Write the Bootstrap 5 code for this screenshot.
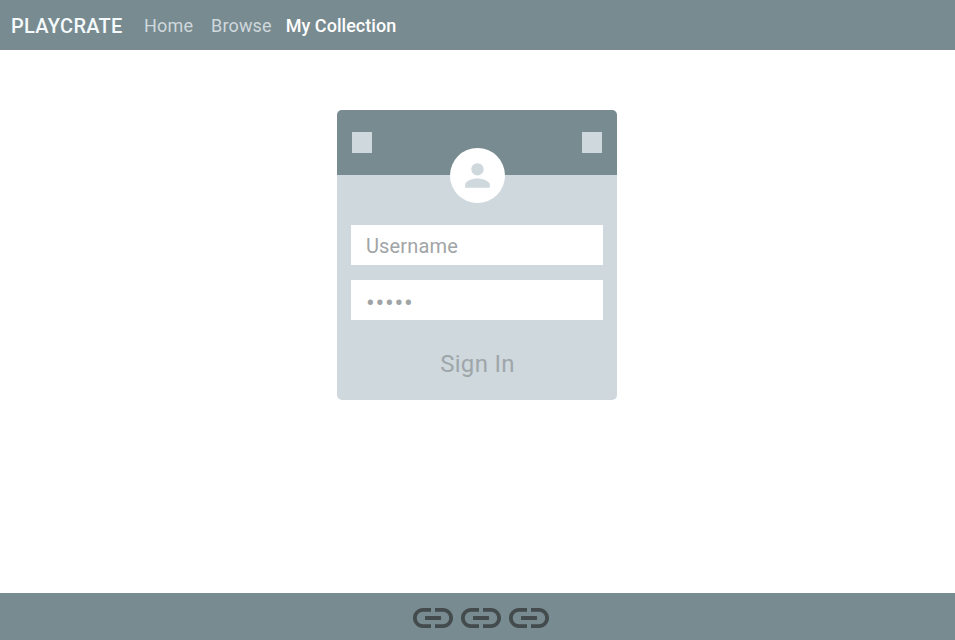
<!DOCTYPE html>
<html lang="en">
<head>
<meta charset="utf-8">
<meta name="viewport" content="width=device-width, initial-scale=1">
<title>Playcrate</title>
<link href="https://cdn.jsdelivr.net/npm/bootstrap@5.3.0/dist/css/bootstrap.min.css" rel="stylesheet">
<style>
  :root { --slate: #788b90; --mist: #cfd8dd; --ink: #9fa6aa; }
  body { font-family: Roboto, sans-serif; }
  .topbar { height: 50px; background: var(--slate); padding: 0 0 0 11px; }
  .topbar .navbar-brand { font-size: 20px; font-weight: 500; letter-spacing: .3px; color: #f4fafb; margin-right: 21.4px; padding: 2px 0 0; line-height: 30px; }
  .topbar .navbar-nav .nav-link { font-size: 18px; line-height: 27px; letter-spacing: .14px; color: #cfd8dd; padding: 1px 0 0; }
  .topbar .navbar-nav .nav-link.active { color: #fff; font-weight: 500; letter-spacing: .04px; }
  .item-browse { margin-left: 18px; }
  .item-collection { margin-left: 14px; }
  .login-card { width: 280px; height: 290px; margin-top: 60px; margin-right: 1px; border-radius: 5px; background: var(--mist); }
  .login-head { height: 65px; background: var(--slate); padding: 22px 15px 0; }
  .square { width: 20px; height: 21px; background: var(--mist); }
  .avatar { width: 55px; height: 55px; top: 38px; left: 113px; padding-bottom: 1px; }
  .login-body { padding: 50px 14px 0; }
  .login-body .form-control { height: 40px; padding: 2px 15px 0; font-size: 20px; color: var(--ink); }
  .login-body .form-control::placeholder { color: #a1a4a6; opacity: 1; letter-spacing: .15px; }
  .login-body .secret { padding: 9px 15px 0; margin-top: 15px; }
  .login-body .secret::placeholder { font-size: 26px; letter-spacing: .75px; }
  .sign-in { margin-top: 26px; font-size: 24px; line-height: 36px; letter-spacing: .3px; padding-left: 1px; color: var(--ink); }
  .footbar { height: 47px; background: var(--slate); padding: 2px 0 0 7px; }
</style>
</head>
<body class="d-flex flex-column vh-100 bg-white overflow-hidden">
<nav class="topbar navbar navbar-expand flex-shrink-0 justify-content-start">
  <a class="navbar-brand" href="#">PLAYCRATE</a>
  <ul class="navbar-nav">
    <li class="nav-item"><a class="nav-link" href="#">Home</a></li>
    <li class="nav-item item-browse"><a class="nav-link" href="#">Browse</a></li>
    <li class="nav-item item-collection"><a class="nav-link active" href="#">My Collection</a></li>
  </ul>
</nav>

<main class="flex-grow-1 d-flex justify-content-center align-items-start">
  <form class="login-card position-relative overflow-hidden">
    <div class="login-head d-flex justify-content-between align-items-start">
      <span class="square"></span>
      <span class="square"></span>
    </div>
    <div class="avatar position-absolute rounded-circle bg-white d-flex justify-content-center align-items-center">
      <svg width="37" height="37" viewBox="0 0 24 24" fill="#cfd8dd"><path d="M12 12c2.21 0 4-1.79 4-4s-1.79-4-4-4-4 1.79-4 4 1.79 4 4 4zm0 2c-2.67 0-8 1.34-8 4v2h16v-2c0-2.66-5.33-4-8-4z"/></svg>
    </div>
    <div class="login-body">
      <input class="form-control border-0 rounded-0" type="text" placeholder="Username" aria-label="Username">
      <input class="form-control border-0 rounded-0 secret" type="password" placeholder="•••••" aria-label="Password">
      <button class="sign-in btn border-0 py-0 pe-0 w-100" type="button">Sign In</button>
    </div>
  </form>
</main>

<footer class="footbar flex-shrink-0 d-flex justify-content-center align-items-center">
  <svg width="0" height="0" class="d-none"><symbol id="link" viewBox="0 5 24 14"><path d="M3.9 12c0-1.71 1.39-3.1 3.1-3.1h4V7H7c-2.76 0-5 2.24-5 5s2.24 5 5 5h4v-1.9H7c-1.71 0-3.1-1.39-3.1-3.1zM8 13h8v-2H8v2zm9-6h-4v1.9h4c1.71 0 3.1 1.39 3.1 3.1s-1.39 3.1-3.1 3.1h-4V17h4c2.76 0 5-2.24 5-5s-2.24-5-5-5z"/></symbol></svg>
  <a href="#" class="d-flex" aria-label="Link 1"><svg width="48" height="28" fill="#434b4d"><use href="#link"/></svg></a>
  <a href="#" class="d-flex" aria-label="Link 2"><svg width="48" height="28" fill="#434b4d"><use href="#link"/></svg></a>
  <a href="#" class="d-flex" aria-label="Link 3"><svg width="48" height="28" fill="#434b4d"><use href="#link"/></svg></a>
</footer>
<script src="https://cdn.jsdelivr.net/npm/bootstrap@5.3.0/dist/js/bootstrap.bundle.min.js"></script>
</body>
</html>
